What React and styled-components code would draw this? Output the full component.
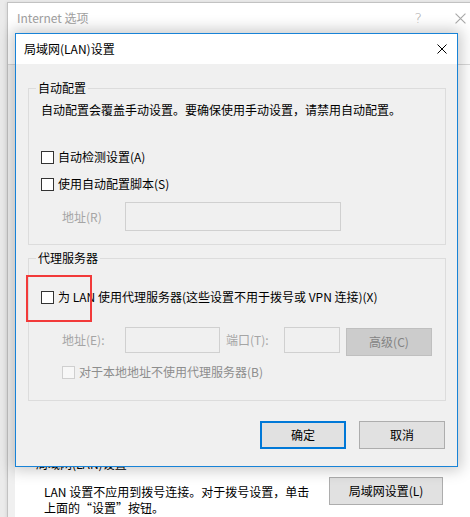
import React from "react";
import styled, { createGlobalStyle } from "styled-components";

const Global = createGlobalStyle`
  html, body { margin: 0; padding: 0; background: #ebebeb; }
  * { box-sizing: border-box; }
  body { font-family: "Noto Sans CJK SC", "Noto Sans", sans-serif; font-size: 12px; }
`;

const FONT = `"Noto Sans CJK SC", "Noto Sans", sans-serif`;

const Desktop = styled.div`
  position: relative;
  width: 470px;
  height: 517px;
  overflow: hidden;
  background: #ebebeb;
  font-family: ${FONT};
  font-size: 12px;
  line-height: 16px;
  color: #000;
`;

/* ---------- background window ---------- */
const BackWindow = styled.div`
  position: absolute;
  left: 7px;
  top: 2px;
  width: 480px;
  height: 540px;
  border: 1px solid #c2c2c2;
  background: #fff;
  display: flex;
  flex-direction: column;
  box-shadow: -1px 0 3px rgba(0, 0, 0, 0.08);
`;

const BackTitle = styled.div`
  height: 30px;
  flex: none;
  display: flex;
  align-items: center;
  justify-content: space-between;
  padding: 0 20px 0 9px;
  color: #a0a0a0;
`;

const TitleText = styled.span`
  font-size: 12px;
  line-height: 16px;
`;

const BackControls = styled.div`
  display: flex;
  align-items: center;
  gap: 33px;
  color: #a8a8a8;
`;

const Help = styled.span`
  font-family: "DejaVu Sans", sans-serif;
  font-size: 14px;
  font-weight: 300;
`;

const TabStrip = styled.div`
  height: 32px;
  flex: none;
  display: flex;
  border-bottom: 1px solid #d9d9d9;
`;

const Gutter = styled.div`
  width: 7px;
  flex: none;
  background: #f0f0f0;
`;

const BackBody = styled.div`
  flex: 1;
  display: flex;
`;

const BackPage = styled.div`
  flex: 1;
  background: #fff;
  padding: 391px 0 0 21px;
`;

const BackGroupLabel = styled.div`
  line-height: 16px;
  color: #000;
`;

const BackRow = styled.div`
  display: flex;
  align-items: flex-start;
  margin-top: 5px;
`;

const BackText = styled.div`
  width: 290px;
  padding: 7px 0 0 8px;
  line-height: 16px;
`;

const BackButton = styled.div`
  margin-left: 3px;
  width: 114px;
  height: 28px;
  border: 1px solid #adadad;
  background: #e1e1e1;
  display: flex;
  align-items: center;
  justify-content: center;
`;

/* ---------- dialog ---------- */
const Dialog = styled.div`
  position: absolute;
  left: 15px;
  top: 33px;
  width: 443px;
  height: 434px;
  border: 1px solid #1883d7;
  background: #f0f0f0;
  display: flex;
  flex-direction: column;
  box-shadow: 0 0 14px 3px rgba(0, 0, 0, 0.22);
`;

const TitleBar = styled.div`
  height: 30px;
  flex: none;
  background: #fff;
  display: flex;
  align-items: center;
  justify-content: space-between;
  padding: 0 10px 0 8px;
`;

const Client = styled.div`
  flex: 1;
  padding: 16px 11px 0 12px;
  display: flex;
  flex-direction: column;
`;

const Group = styled.fieldset`
  margin: ${(p) => p.$mt}px 0 0 0;
  min-width: 0;
  border: 1px solid #dcdcdc;
  padding: 0;
`;

const Legend = styled.legend`
  margin-left: 7px;
  padding: 0 2px;
  line-height: 16px;
  font-size: 12px;
`;

const GroupBody = styled.div`
  padding: 0 0 ${(p) => p.$pb}px 12px;
`;

const Desc = styled.div`
  padding-top: 6px;
  line-height: 16px;
`;

const CheckRow = styled.div`
  display: flex;
  align-items: center;
  gap: 4px;
  height: 16px;
  margin-top: ${(p) => p.$mt}px;
  padding-left: ${(p) => p.$indent || 0}px;
  color: ${(p) => (p.$disabled ? "#8d8d8d" : "#000")};
`;

const Box = styled.span`
  width: 13px;
  height: 13px;
  flex: none;
  border: 1px solid ${(p) => (p.$disabled ? "#cfcfcf" : "#333")};
  background: ${(p) => (p.$disabled ? "#f7f7f7" : "#fff")};
`;

const FieldRow = styled.div`
  display: flex;
  align-items: flex-start;
  margin-top: ${(p) => p.$mt}px;
  padding-left: 21px;
`;

const FieldLabel = styled.span`
  width: ${(p) => p.$w}px;
  flex: none;
  height: ${(p) => p.$h}px;
  display: flex;
  align-items: center;
  color: #a5a5a5;
  margin-left: ${(p) => p.$ml || 0}px;
`;

const Input = styled.div`
  width: ${(p) => p.$w}px;
  height: ${(p) => p.$h}px;
  flex: none;
  border: 1px solid #d0d0d0;
  background: #f0f0f0;
`;

const DisabledButton = styled.div`
  width: 86px;
  height: 28px;
  margin: 1px 0 0 6px;
  border: 1px solid #bfbfbf;
  background: #cccccc;
  color: #838383;
  display: flex;
  align-items: center;
  justify-content: center;
`;

const ButtonRow = styled.div`
  display: flex;
  justify-content: flex-end;
  gap: 13px;
  margin-top: 20px;
  padding-right: 1px;
`;

const Button = styled.div`
  width: 86px;
  height: 28px;
  background: #e1e1e1;
  border: ${(p) => (p.$default ? "2px solid #0078d7" : "1px solid #adadad")};
  display: flex;
  align-items: center;
  justify-content: center;
`;

const Highlight = styled.div`
  position: absolute;
  left: 10px;
  top: 241px;
  width: 66px;
  height: 47px;
  border: 2px solid #f23a3a;
  pointer-events: none;
`;

const CloseIcon = ({ color = "#000", size = 10 }) => (
  <svg width={size} height={size} viewBox="0 0 10 10">
    <path d="M0.5 0.5 L9.5 9.5 M9.5 0.5 L0.5 9.5" stroke={color} strokeWidth="1" fill="none" />
  </svg>
);

export default function App() {
  return (
    <>
      <Global />
      <Desktop>
        <BackWindow>
          <BackTitle>
            <TitleText>Internet 选项</TitleText>
            <BackControls>
              <Help>?</Help>
              <CloseIcon color="#a8a8a8" size={11} />
            </BackControls>
          </BackTitle>
          <TabStrip />
          <BackBody>
            <Gutter />
            <BackPage>
              <BackGroupLabel>局域网(LAN)设置</BackGroupLabel>
              <BackRow>
                <BackText>
                  LAN 设置不应用到拨号连接。对于拨号设置，单击
                  <br />
                  上面的“设置”按钮。
                </BackText>
                <BackButton>局域网设置(L)</BackButton>
              </BackRow>
            </BackPage>
          </BackBody>
        </BackWindow>

        <Dialog>
          <TitleBar>
            <TitleText>局域网(LAN)设置</TitleText>
            <CloseIcon />
          </TitleBar>
          <Client>
            <Group $mt={0}>
              <Legend>自动配置</Legend>
              <GroupBody $pb={13}>
                <Desc>自动配置会覆盖手动设置。要确保使用手动设置，请禁用自动配置。</Desc>
                <CheckRow $mt={31}>
                  <Box />
                  自动检测设置(A)
                </CheckRow>
                <CheckRow $mt={11}>
                  <Box />
                  使用自动配置脚本(S)
                </CheckRow>
                <FieldRow $mt={10}>
                  <FieldLabel $w={63} $h={29}>地址(R)</FieldLabel>
                  <Input $w={216} $h={29} />
                </FieldRow>
              </GroupBody>
            </Group>
            <Group $mt={5}>
              <Legend>代理服务器</Legend>
              <GroupBody $pb={20}>
                <CheckRow $mt={23}>
                  <Box />
                  为 LAN 使用代理服务器(这些设置不用于拨号或 VPN 连接)(X)
                </CheckRow>
                <FieldRow $mt={22}>
                  <FieldLabel $w={63} $h={26}>地址(E):</FieldLabel>
                  <Input $w={95} $h={26} />
                  <FieldLabel $w={58} $h={26} $ml={6}>端口(T):</FieldLabel>
                  <Input $w={56} $h={26} />
                  <DisabledButton>高级(C)</DisabledButton>
                </FieldRow>
                <CheckRow $mt={8} $indent={21} $disabled>
                  <Box $disabled />
                  对于本地地址不使用代理服务器(B)
                </CheckRow>
              </GroupBody>
            </Group>
            <ButtonRow>
              <Button $default>确定</Button>
              <Button>取消</Button>
            </ButtonRow>
          </Client>
          <Highlight />
        </Dialog>
      </Desktop>
    </>
  );
}
